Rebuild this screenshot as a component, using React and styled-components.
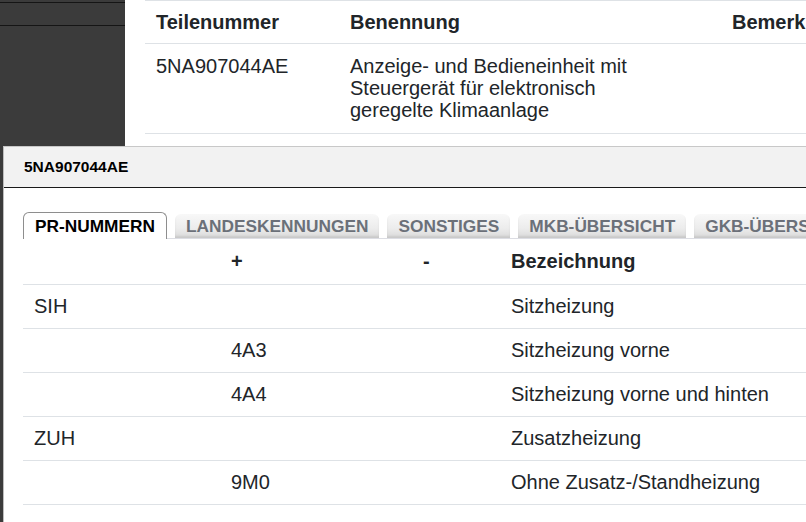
import React from 'react'
import styled, { createGlobalStyle } from 'styled-components'

const GlobalStyle = createGlobalStyle`
  html, body {
    margin: 0;
    padding: 0;
    background: #ffffff;
    font-family: "Liberation Sans", Arial, sans-serif;
    color: #212529;
    overflow: hidden;
  }
`

const Page = styled.div`
  position: relative;
  display: flex;
  width: 806px;
  height: 522px;
  overflow: hidden;
`

const Sidebar = styled.div`
  width: 125px;
  flex: none;
  background: #3b3b3b;
  padding-top: 2px;
  box-sizing: border-box;
`

const SideItem = styled.div`
  height: 22px;
  border-top: 1px solid #151515;
`

const Main = styled.div`
  flex: 1;
  padding-left: 20px;
`

const PartsTable = styled.table`
  border-collapse: collapse;
  width: 720px;
  font-size: 20px;
  border-top: 1px solid #dee2e6;
`

const PartsHead = styled.th`
  text-align: left;
  font-weight: bold;
  height: 43px;
  padding: 0 11px;
  width: ${(p) => p.$w || 'auto'};
  border-bottom: 1px solid #dee2e6;
  box-sizing: border-box;
  white-space: nowrap;
`

const PartsCell = styled.td`
  vertical-align: top;
  line-height: 22px;
  padding: 11px 11px 12px;
  border-bottom: 1px solid #dee2e6;
`

const Dialog = styled.div`
  position: absolute;
  left: 3px;
  top: 146px;
  width: 900px;
  height: 420px;
  background: #ffffff;
  border-top: 1px solid #c8c8c8;
  border-left: 1px solid #bdbdbd;
`

const DialogHeader = styled.div`
  height: 40px;
  background: #f2f2f2;
  border-bottom: 1px solid #1a1a1a;
  display: flex;
  align-items: center;
  padding-left: 20px;
  font-size: 15.5px;
  font-weight: bold;
  color: #000;
`

const DialogBody = styled.div`
  padding: 24px 0 0 19px;
`

const TabStrip = styled.div`
  display: flex;
  align-items: flex-end;
  gap: 8px;
  height: 26px;
  border-bottom: 1px solid #dcdde3;
`

const Tab = styled.div`
  flex: none;
  box-sizing: border-box;
  display: flex;
  align-items: center;
  font-size: 17.3px;
  font-weight: bold;
  white-space: nowrap;
  border-radius: 6px 6px 0 0;
  ${(p) =>
    p.$active
      ? `
    height: 27px;
    margin-bottom: -1px;
    padding: 1px 11px 0 11px;
    background: #ffffff;
    color: #000;
    border: 1px solid #8e8e8e;
    border-bottom: none;
  `
      : `
    height: 24px;
    padding: 1px 11px 0 11px;
    color: #6b7079;
    background: linear-gradient(#f8f8f8, #ececec 60%, #d9d9d9);
    box-shadow: inset 0 -2px 2px rgba(0, 0, 0, 0.08);
  `}
`

const PrTable = styled.table`
  border-collapse: collapse;
  width: 900px;
  font-size: 20px;
`

const PrHead = styled.th`
  text-align: left;
  font-weight: bold;
  height: 45px;
  padding: 0 11px;
  width: ${(p) => p.$w || 'auto'};
  box-sizing: border-box;
  border-bottom: 1px solid #dee2e6;
`

const PrCell = styled.td`
  height: 43px;
  padding: 0 11px;
  border-bottom: 1px solid #dee2e6;
  white-space: nowrap;
`

const tabs = ['PR-NUMMERN', 'LANDESKENNUNGEN', 'SONSTIGES', 'MKB-ÜBERSICHT', 'GKB-ÜBERSICHT']

const rows = [
  { family: 'SIH', plus: '', minus: '', text: 'Sitzheizung' },
  { family: '', plus: '4A3', minus: '', text: 'Sitzheizung vorne' },
  { family: '', plus: '4A4', minus: '', text: 'Sitzheizung vorne und hinten' },
  { family: 'ZUH', plus: '', minus: '', text: 'Zusatzheizung' },
  { family: '', plus: '9M0', minus: '', text: 'Ohne Zusatz-/Standheizung' },
]

const App = () => {
  return (
    <>
      <GlobalStyle />
      <Page>
        <Sidebar>
          <SideItem />
          <SideItem />
        </Sidebar>
        <Main>
          <PartsTable>
            <thead>
              <tr>
                <PartsHead $w="194px">Teilenummer</PartsHead>
                <PartsHead $w="382px">Benennung</PartsHead>
                <PartsHead>Bemerkung</PartsHead>
              </tr>
            </thead>
            <tbody>
              <tr>
                <PartsCell>5NA907044AE</PartsCell>
                <PartsCell>
                  Anzeige- und Bedieneinheit mit
                  <br />
                  Steuergerät für elektronisch
                  <br />
                  geregelte Klimaanlage
                </PartsCell>
                <PartsCell />
              </tr>
            </tbody>
          </PartsTable>
        </Main>

        <Dialog>
          <DialogHeader>5NA907044AE</DialogHeader>
          <DialogBody>
            <TabStrip>
              {tabs.map((t, i) => (
                <Tab key={t} $active={i === 0}>{t}</Tab>
              ))}
            </TabStrip>
            <PrTable>
              <thead>
                <tr>
                  <PrHead $w="197px"></PrHead>
                  <PrHead $w="192px">+</PrHead>
                  <PrHead $w="88px">-</PrHead>
                  <PrHead>Bezeichnung</PrHead>
                </tr>
              </thead>
              <tbody>
                {rows.map((r, i) => (
                  <tr key={i}>
                    <PrCell>{r.family}</PrCell>
                    <PrCell>{r.plus}</PrCell>
                    <PrCell>{r.minus}</PrCell>
                    <PrCell>{r.text}</PrCell>
                  </tr>
                ))}
              </tbody>
            </PrTable>
          </DialogBody>
        </Dialog>
      </Page>
    </>
  )
}

export default App
